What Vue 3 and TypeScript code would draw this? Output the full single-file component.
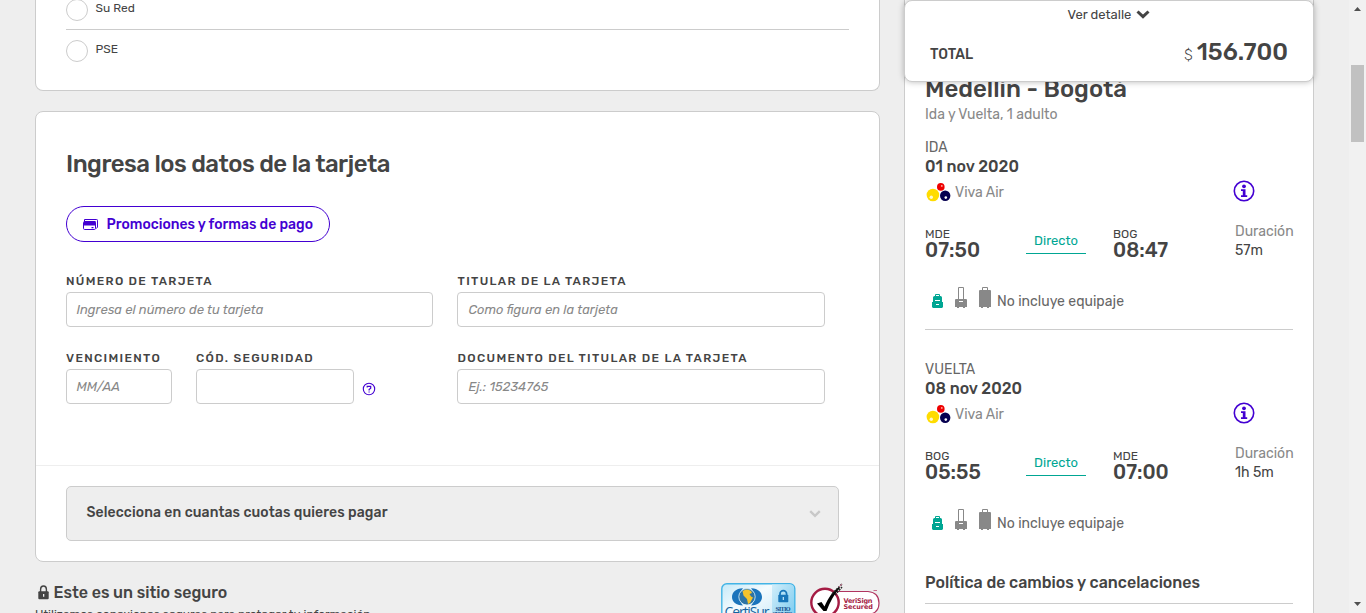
<script setup lang="ts">
interface Flight {
  kind: string
  date: string
  from: string
  departs: string
  to: string
  arrives: string
  duration: string
}

const methods: string[] = ['Su Red', 'PSE']

const flights: Flight[] = [
  { kind: 'IDA', date: '01 nov 2020', from: 'MDE', departs: '07:50', to: 'BOG', arrives: '08:47', duration: '57m' },
  { kind: 'VUELTA', date: '08 nov 2020', from: 'BOG', departs: '05:55', to: 'MDE', arrives: '07:00', duration: '1h 5m' },
]
</script>

<template>
  <div class="page">
    <main class="main">
      <section class="card methods">
        <div v-for="m in methods" :key="m" class="method">
          <span class="radio"></span>
          <span class="method-name">{{ m }}</span>
        </div>
      </section>

      <section class="card payment">
        <div class="form">
          <h2>Ingresa los datos de la tarjeta</h2>
          <button class="promo" type="button">
            <svg width="15" height="12" viewBox="0 0 15 12">
              <path d="M1.500 2V.5h12.200q.8 0 .8.8v6.700l-1 1.500" fill="none" stroke="#4300d2" />
              <rect x=".5" y="2.500" width="12" height="8" rx="1.200" fill="#fff" stroke="#4300d2" />
              <path d="M1 2h11.500v4.500H1zM8.500 8h2v1.300h-2z" fill="#4300d2" />
            </svg>
            <span>Promociones y formas de pago</span>
          </button>

          <div class="fields">
            <label class="field">
              <span class="label">NÚMERO DE TARJETA</span>
              <input placeholder="Ingresa el número de tu tarjeta" />
            </label>
            <label class="field holder">
              <span class="label">TITULAR DE LA TARJETA</span>
              <input placeholder="Como figura en la tarjeta" />
            </label>
            <div class="pair">
              <label class="field expiry">
                <span class="label">VENCIMIENTO</span>
                <input placeholder="MM/AA" />
              </label>
              <label class="field code">
                <span class="label">CÓD. SEGURIDAD</span>
                <input />
              </label>
              <svg class="help" width="14" height="14" viewBox="0 0 14 14">
                <circle cx="7" cy="7" r="5.700" fill="none" stroke="#4300d2" stroke-width="1.100" />
                <path d="M5.200 5.600V4.300h3.500v2L7.100 7.500v1" fill="none" stroke="#4300d2" stroke-width="1.200" />
                <path d="M6.500 9.400h1.200v1.200H6.500z" fill="#4300d2" />
              </svg>
            </div>
            <label class="field holder">
              <span class="label">DOCUMENTO DEL TITULAR DE LA TARJETA</span>
              <input placeholder="Ej.: 15234765" />
            </label>
          </div>
        </div>

        <div class="installments">
          <div class="select">
            <span>Selecciona en cuantas cuotas quieres pagar</span>
            <svg width="12" height="8" viewBox="0 0 12 8">
              <path d="M1.200 1.200 6 5.800l4.800-4.600" fill="none" stroke="#c8c8c8" stroke-width="2.400" />
            </svg>
          </div>
        </div>
      </section>

      <footer class="secure">
        <div class="secure-text">
          <h3>
            <svg width="11" height="15" viewBox="0 0 11 15">
              <path d="M2.600 7V4.200a2.900 3.200 0 0 1 5.800 0V7" fill="none" stroke="#444" stroke-width="1.400" />
              <rect x=".3" y="6.200" width="10.400" height="8" rx="1" fill="#444" />
              <path d="M5 9h1.300v2.800H5z" fill="#eee" />
            </svg>
            <span>Este es un sitio seguro</span>
          </h3>
          <p>Utilizamos conexiones seguras para proteger tu información.</p>
        </div>
        <div class="seals">
          <svg width="75" height="40" viewBox="0 0 75 40">
            <defs>
              <linearGradient id="seal" x1="0" y1="0" x2="1" y2="1">
                <stop offset="0" stop-color="#c5e9f8" />
                <stop offset=".35" stop-color="#f4fbfe" />
                <stop offset="1" stop-color="#b4e0f5" />
              </linearGradient>
              <linearGradient id="side" x1="0" y1="0" x2="1" y2="1">
                <stop offset="0" stop-color="#d2eefa" />
                <stop offset="1" stop-color="#75c9ef" />
              </linearGradient>
            </defs>
            <rect x=".8" y=".8" width="73" height="48" rx="5" fill="url(#seal)" stroke="#42b4e6" stroke-width="1.400" />
            <path d="M51 1.600h18q4 0 4 4V40H51z" fill="url(#side)" />
            <path d="M22 5.200C15 5 11 9.500 11 14s4 8.500 11 8.500c-4-4-4-13 0-17.300z" fill="#1a74bc" />
            <path d="M30 5.200c7-.2 11 4.300 11 8.800s-4 8.500-11 8.500c4-4 4-13 0-17.300z" fill="#1a74bc" />
            <circle cx="26" cy="13.800" r="8.200" fill="#2d74a4" stroke="#e1f5fc" stroke-width=".8" />
            <path d="M21.500 8q4.500-3 8.500 0l1 2-2.500 1 1.500 2.500 2 1-3 5.500-2 1-1-5-3.500-3.500z" fill="#f5c32b" />
            <path d="M59 13v-2a3.300 3.300 0 0 1 6.600 0v2" fill="none" stroke="#1776b9" stroke-width="1.700" />
            <rect x="57.300" y="11.800" width="10" height="7.500" rx=".8" fill="#1776b9" />
            <path d="M61.700 14h1.300v3h-1.300z" fill="#b4e0f5" />
            <text class="certi" x="3.500" y="34" textLength="45">CertiSur</text>
            <text class="site" x="54.500" y="27.500" textLength="15">SITIO</text>
            <text class="site" x="51.500" y="33" textLength="20">SEGURO</text>
          </svg>
          <svg width="71" height="40" viewBox="0 0 71 40">
            <path d="M18 8.500h40q11 1 11 11.500t-11 11.500H18" fill="#fff" stroke="#b03460" stroke-width="1.200" />
            <circle cx="15" cy="19.500" r="13.700" fill="#fff" stroke="#a51c44" stroke-width="2.400" />
            <path d="M7 20.500l4.500-1.500 3 4.500C18 15 23 8 29 4l1 1c-6 6-10 14-13.500 23h-3z" fill="#000" />
            <path d="M22 11 32 1M25 12l7-8" stroke="#222" stroke-width="1.500" stroke-dasharray="2 1" />
            <path d="m29 4 3-3" stroke="#c86c8c" />
            <path d="M63.500 7.500h3.500" stroke="#c86c8c" />
            <text class="veri" x="33.500" y="19.500" textLength="29">VeriSign</text>
            <text class="veri" x="33.500" y="25.500" textLength="29.500">Secured</text>
          </svg>
        </div>
      </footer>
    </main>

    <aside class="summary">
      <div class="total">
        <div class="detail">
          <span>Ver detalle</span>
          <svg width="14" height="9" viewBox="0 0 14 9">
            <path d="M1.500 1.500 7 6.700l5.500-5.200" fill="none" stroke="#444" stroke-width="3" />
          </svg>
        </div>
        <div class="amount">
          <strong class="total-label">TOTAL</strong>
          <span class="currency">$</span>
          <strong class="price">156.700</strong>
        </div>
      </div>

      <h2 class="route">Medellín - Bogotá</h2>
      <p class="trip">Ida y Vuelta, 1 adulto</p>

      <section v-for="f in flights" :key="f.kind" class="flight">
        <div class="kind">{{ f.kind }}</div>
        <div class="date">{{ f.date }}</div>
        <div class="airline">
          <svg width="25" height="19" viewBox="0 0 25 19">
            <circle cx="6.900" cy="12" r="6.300" fill="#ffdc00" />
            <circle cx="14.800" cy="3.900" r="3.800" fill="#ee0000" />
            <circle cx="19.200" cy="12.800" r="5.200" fill="#060050" />
            <circle cx="5.300" cy="14.300" r="1.700" fill="#fff8cc" />
            <circle cx="15.800" cy="2.900" r=".9" fill="#ffb0a8" />
            <circle cx="19.800" cy="14.600" r="1.300" fill="#fff" />
          </svg>
          <span>Viva Air</span>
          <svg class="info" width="22" height="22" viewBox="0 0 22 22">
            <circle cx="11" cy="11" r="9.700" fill="none" stroke="#4300d2" stroke-width="1.600" />
            <circle cx="11" cy="6.300" r="1.900" fill="#4300d2" />
            <path d="M8 9.200h4.500v6h1.700v1.700H8v-1.700h1.800v-4.300H8z" fill="#4300d2" />
          </svg>
        </div>
        <div class="times">
          <div class="stop">
            <span>{{ f.from }}</span>
            <strong>{{ f.departs }}</strong>
          </div>
          <div class="direct">Directo</div>
          <div class="stop">
            <span>{{ f.to }}</span>
            <strong>{{ f.arrives }}</strong>
          </div>
          <div class="duration">
            <span>Duración</span>
            <span class="length">{{ f.duration }}</span>
          </div>
        </div>
        <div class="baggage">
          <svg width="60" height="22" viewBox="0 0 60 22">
            <path d="M4.500 10V7.500h4V10" fill="none" stroke="#00a693" />
            <path d="M2 10.500Q2 9 3.500 9h6q1.500 0 1.500 1.500V15h1v5l-1 1H2l-1-1v-5h1z" fill="#00a693" />
            <path d="M4 13.500h5M5 17.500h3" stroke="#fff" />
            <path d="M27.500 12V.5h5V12" fill="none" stroke="#888" />
            <path d="M24 13q0-1 1-1h10q1 0 1 1v7h-2v1h-2v-1h-4v1h-2v-1h-2z" fill="#888" />
            <path d="M28 14.500h4" stroke="#fff" />
            <path d="M51.500 3V.5h5V3" fill="none" stroke="#888" />
            <path d="M48 4q0-1 1-1h10q1 0 1 1v16h-2v1h-2v-1h-4v1h-2v-1h-2z" fill="#888" />
          </svg>
          <span>No incluye equipaje</span>
        </div>
      </section>

      <h3 class="policy">Política de cambios y cancelaciones</h3>
    </aside>

    <div class="scrollbar">
      <svg width="7" height="4" viewBox="0 0 7 4"><path d="M0 4h7L3.500 0z" fill="#505050" /></svg>
      <div class="thumb"></div>
      <svg class="down" width="7" height="4" viewBox="0 0 7 4"><path d="M0 0h7L3.500 4z" fill="#505050" /></svg>
    </div>
  </div>
</template>

<style>
body { margin: 0; overflow: hidden; }
</style>

<style scoped>
* { box-sizing: border-box; }
h2, h3, p { margin: 0; font-weight: 500; }
strong { font-weight: 500; }
svg { display: block; flex: none; }
.page {
  display: flex;
  height: 613px;
  overflow: hidden;
  padding-left: 35px;
  background: #eee;
  color: #444;
  font-family: Rubik, Roboto, "Liberation Sans", sans-serif;
}
.main { width: 845px; flex: none; }
.card { background: #fff; border: 1px solid #ccc; border-radius: 8px; }
.methods {
  height: 91px;
  padding: 0 30px;
  border-top: 0;
  border-radius: 0 0 8px 8px;
}
.method {
  display: flex;
  height: 41px;
  align-items: flex-start;
}
.method:first-child { height: 30px; border-bottom: 1px solid #ccc; }
.radio {
  width: 22px;
  height: 22px;
  flex: none;
  margin-top: 10px;
  border: 1px solid #ccc;
  border-radius: 50%;
}
.method:first-child .radio { margin-top: -1px; }
.method-name { margin: 9px 0 0 7.5px; font-size: 12px; line-height: 20px; }
.method:first-child .method-name { margin-top: -2px; }

.payment { height: 451px; margin-top: 20px; }
.form { height: 354px; padding: 36px 30px 0; border-bottom: 1px solid #eee; }
.form h2 { font-size: 24px; line-height: 32px; letter-spacing: -0.52px; }
.promo {
  display: flex;
  align-items: center;
  width: 264px;
  height: 36px;
  margin-top: 26px;
  padding: 0 0 0 16px;
  background: #fff;
  border: 1px solid #4300d2;
  border-radius: 18px;
  color: #4300d2;
  font: 500 14px/20px Rubik, Roboto, sans-serif;
}
.promo svg { margin-right: 8.6px; margin-top: 2px; }
.promo span { padding-top: 2px; white-space: nowrap; }
.fields {
  display: grid;
  grid-template-columns: 367px 368px;
  gap: 20px 24px;
  margin-top: 28px;
}
.field { display: block; }
.label {
  display: block;
  height: 22px;
  font-size: 12px;
  font-weight: 500;
  line-height: 22px;
  letter-spacing: 1.32px;
  white-space: nowrap;
}
.holder .label { padding-left: 0.6px; }
input {
  display: block;
  width: 100%;
  height: 35px;
  padding: 0 9.4px;
  background: #fff;
  border: 1px solid #ccc;
  border-radius: 4px;
  font: italic 13px Rubik, Roboto, sans-serif;
}
.holder input { padding-left: 10.4px; }
input::placeholder { color: #888; }
.pair { display: flex; }
.expiry { width: 106px; }
.code { width: 158px; margin-left: 24px; }
.help { margin: 35px 0 0 8px; }
.installments { padding: 20px 40px 0 30px; }
.select {
  display: flex;
  justify-content: space-between;
  align-items: center;
  height: 55px;
  padding: 0 17px 0 19.5px;
  background: #eee;
  border: 1px solid #ccc;
  border-radius: 5px;
  font-size: 14px;
  font-weight: 500;
  line-height: 20px;
  letter-spacing: 0.1px;
}
.select span { margin-bottom: 1px; }

.secure { display: flex; justify-content: space-between; }
.secure-text { padding-top: 20px; }
.secure h3 {
  display: flex;
  align-items: center;
  padding-left: 3px;
  font-size: 16px;
  line-height: 21px;
}
.secure h3 svg { margin-right: 4.5px; }
.secure p {
  margin-top: 1px;
  font-size: 12px;
  font-weight: 400;
  line-height: 20px;
}
.seals { display: flex; gap: 14px; padding-top: 21px; margin-right: -1px; }
.certi { font: 14px "Open Sans", sans-serif; fill: #14639e; }
.site { font: bold 5.5px "DejaVu Serif", serif; fill: #1d5792; }
.veri { font: bold 6.5px "DejaVu Sans", sans-serif; fill: #a51c44; }

.summary {
  position: relative;
  width: 410px;
  flex: none;
  margin-left: 24px;
  padding: 74px 20px 0;
  background: #fff;
  border: solid #ccc;
  border-width: 0 1px;
}
.total {
  position: absolute;
  top: 0;
  left: -1px;
  width: 410px;
  height: 82px;
  background: #fff;
  border: 1px solid #ccc;
  border-radius: 8px;
  box-shadow: 0 0 6px rgba(0, 0, 0, 0.28);
}
.detail {
  display: flex;
  align-items: center;
  justify-content: center;
  gap: 5px;
  height: 26px;
  font-size: 13px;
}
.amount {
  display: flex;
  align-items: center;
  height: 49px;
  padding: 0 25px;
}
.total-label { margin-right: auto; padding-top: 6px; font-size: 14px; }
.currency { margin: 7px 4px 0 0; font-size: 14px; font-weight: 300; }
.price { font-size: 24px; }
.route { font-size: 24px; line-height: 30px; }
.trip { height: 21px; color: #888; font-size: 14px; font-weight: 400; line-height: 22px; }

.flight { height: 193px; border-bottom: 1px solid #ccc; margin-top: 12px; font-size: 14px; }
.flight + .flight { margin-top: 29px; border-bottom: 0; }
.kind { height: 20px; color: #666; line-height: 22px; }
.date { font-size: 16px; font-weight: 500; line-height: 20px; }
.airline {
  display: flex;
  align-items: center;
  height: 30px;
  padding-left: 0.5px;
  color: #888;
}
.airline span { margin-left: 4.5px; padding-top: 1px; }
.info { margin: -2px 38px 0 auto; }
.times {
  display: grid;
  grid-template-columns: 101px 60px 27px 122px auto;
  height: 47px;
  margin-top: 15px;
}
.stop:nth-child(3) { grid-column: 4; }
.stop span { display: block; padding-top: 5px; font-size: 12px; line-height: 14px; }
.stop strong { display: block; font-size: 20px; line-height: 19px; }
.direct {
  height: 32px;
  border-bottom: 1px solid #00a693;
  color: #00a693;
  font-size: 13px;
  line-height: 38px;
  text-align: center;
}
.duration span { display: block; color: #888; line-height: 19px; white-space: nowrap; }
.duration .length { color: #444; }
.baggage { display: flex; padding: 18px 0 0 6px; color: #666; }
.baggage span { margin: 5px 0 0 6px; line-height: 20px; }
.policy {
  height: 32px;
  margin-top: 20px;
  border-bottom: 1px solid #ccc;
  font-size: 16px;
  line-height: 21px;
}

.scrollbar {
  display: flex;
  flex-direction: column;
  align-items: center;
  width: 17px;
  margin-left: auto;
  padding: 7px 0;
  background: #f1f1f1;
}
.thumb { width: 13px; height: 77px; margin-top: 54px; background: #c1c1c1; }
.down { margin-top: auto; }
</style>
